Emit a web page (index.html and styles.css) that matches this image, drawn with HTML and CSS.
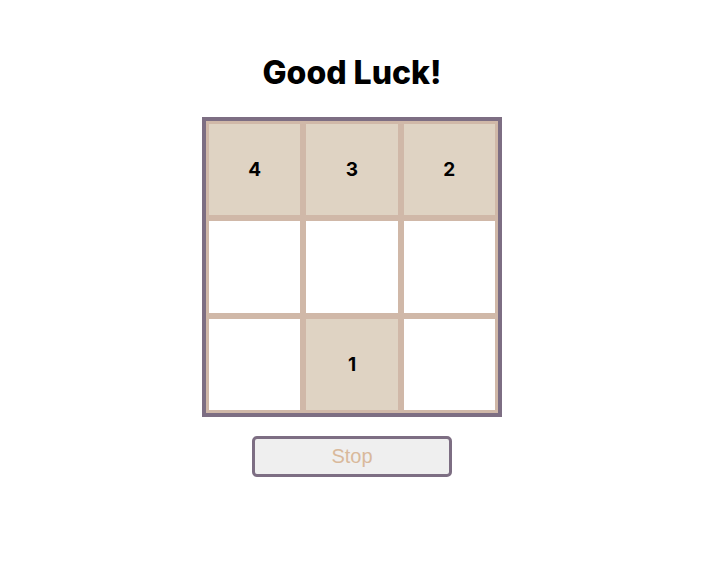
FILE: index.html
```html
<!DOCTYPE html>
<html>
<head>
<meta charset="utf-8">
<link rel="stylesheet" href="styles.css">
</head>
<body>
<main class="app">
  <h1 class="title">Good Luck!</h1>
  <div class="board">
    <div class="cell filled">4</div>
    <div class="cell filled">3</div>
    <div class="cell filled">2</div>
    <div class="cell"></div>
    <div class="cell"></div>
    <div class="cell"></div>
    <div class="cell"></div>
    <div class="cell filled">1</div>
    <div class="cell"></div>
  </div>
  <button class="stop" disabled>Stop</button>
</main>
</body>
</html>
```
FILE: styles.css
```css
html, body {
  margin: 0;
  padding: 0;
  background: #ffffff;
}
.app {
  width: 704px;
  display: flex;
  flex-direction: column;
  align-items: center;
  padding-top: 54px;
  font-family: "Inter", "Lato", sans-serif;
}
.title {
  margin: 0;
  font-size: 32px;
  font-weight: 800;
  line-height: 38px;
  color: #000;
  letter-spacing: 0;
}
.board {
  margin-top: 25px;
  width: 300px;
  height: 300px;
  box-sizing: border-box;
  border: 4px solid #7D6E83;
  display: grid;
  grid-template-columns: repeat(3, 1fr);
  grid-template-rows: repeat(3, 1fr);
}
.cell {
  box-sizing: border-box;
  border: 3px solid #D0B8A8;
  background: #ffffff;
  display: flex;
  align-items: center;
  justify-content: center;
  font-size: 19px;
  font-weight: 700;
  color: #000;
}
.cell.filled {
  background: #DFD3C3;
}
.stop {
  margin-top: 19px;
  width: 200px;
  height: 41px;
  box-sizing: border-box;
  border: 3px solid #7D6E83;
  border-radius: 5px;
  background: #EFEFEF;
  color: #D9B99B;
  font-family: "Liberation Sans", Arial, sans-serif;
  font-size: 20px;
  padding: 0;
}
```
